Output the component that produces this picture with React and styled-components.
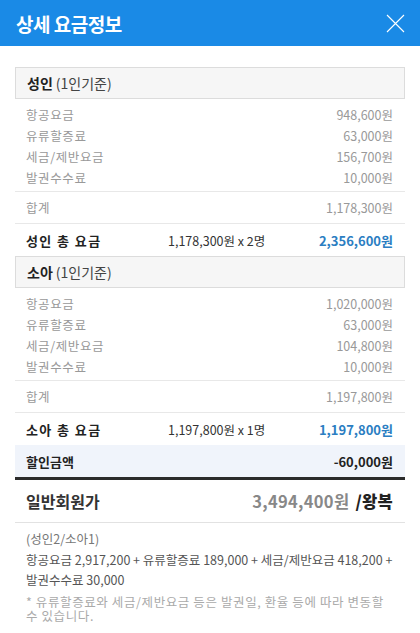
import React from 'react';
import styled, { createGlobalStyle } from 'styled-components';

const GlobalStyle = createGlobalStyle`
  html, body {
    margin: 0;
    padding: 0;
    background: #fff;
    font-family: "Noto Sans CJK KR", "Noto Sans", sans-serif;
  }
`;

// Styles //
const Page = styled.div`
  width: 420px;
  height: 633px;
  overflow: hidden;
  background: #fff;
`;

const Header = styled.div`
  height: 46px;
  background-color: #1a8ae6;
  display: flex;
  align-items: center;
  justify-content: space-between;
  padding: 0 15px 0 16px;
`;

const Title = styled.h1`
  margin: 0;
  color: #fff;
  font-size: 19px;
  font-weight: 700;
  letter-spacing: -0.5px;
`;

const CloseButton = styled.button`
  width: 20px;
  height: 20px;
  padding: 0;
  border: 0;
  background: none;
  display: flex;
  align-items: center;
  justify-content: center;
`;

const Body = styled.div`
  padding: 21px 15px 0;
`;

const SectionHead = styled.div`
  height: 30px;
  display: flex;
  align-items: center;
  padding: 0 11px;
  background-color: #f6f6f6;
  border: 1px solid #dcdcdc;
  font-size: 14px;
  color: #444;
  strong {
    color: #222;
    font-weight: 700;
    margin-right: 3px;
  }
`;

const Items = styled.div`
  padding: 5px 0 3px;
  border-bottom: 1px solid #e8e8e8;
`;

const Row = styled.div`
  display: flex;
  justify-content: space-between;
  align-items: center;
  padding: 0 12px 0 11px;
  height: ${({ tall }) => (tall ? '31px' : '21px')};
  font-size: 12.5px;
  color: #999;
`;

const RowLabel = styled.span`
  letter-spacing: 0.6px;
`;

const SumRow = styled(Row)`
  border-bottom: 1px solid #e8e8e8;
`;

const TotalRow = styled.div`
  height: 32px;
  display: grid;
  grid-template-columns: 142px 1fr auto;
  align-items: center;
  padding: 0 12px 0 11px;
  font-size: 13px;
`;

const TotalLabel = styled.span`
  font-weight: 700;
  color: #222;
  letter-spacing: 1.4px;
`;

const TotalCalc = styled.span`
  color: #333;
  font-size: 12.5px;
`;

const TotalValue = styled.span`
  color: #2b7ec2;
  font-weight: 700;
`;

const DiscountRow = styled.div`
  height: 32px;
  display: flex;
  justify-content: space-between;
  align-items: center;
  padding: 0 12px 0 11px;
  background-color: #f0f4fb;
  border-bottom: 3px solid #2b2b2b;
  font-size: 13px;
  font-weight: 700;
  color: #222;
`;

const GrandRow = styled.div`
  height: 42px;
  display: flex;
  justify-content: space-between;
  align-items: center;
  padding: 0 12px 0 11px;
  border-bottom: 1px solid #e2e2e2;
`;

const GrandLabel = styled.span`
  font-size: 16px;
  font-weight: 700;
  color: #333;
`;

const GrandValue = styled.span`
  font-size: 16.5px;
  font-weight: 700;
  color: #888;
  letter-spacing: 0.3px;
  b {
    color: #222;
    margin-left: 6px;
  }
`;

const Notes = styled.div`
  padding: 6px 11px 0;
`;

const NoteLine = styled.p`
  margin: 0;
  font-size: ${({ small }) => (small ? '12.5px' : '12.5px')};
  line-height: ${({ tight }) => (tight ? '14px' : '20.5px')};
  letter-spacing: ${({ small }) => (small ? '0.6px' : '0')};
  color: ${({ tone }) => tone};
  margin-top: ${({ gap }) => gap || 0};
`;

// Data //
const adult = {
  name: '성인',
  items: [
    ['항공요금', '948,600원'],
    ['유류할증료', '63,000원'],
    ['세금/제반요금', '156,700원'],
    ['발권수수료', '10,000원'],
  ],
  sum: '1,178,300원',
  calc: '1,178,300원 x 2명',
  total: '2,356,600원',
};

const child = {
  name: '소아',
  items: [
    ['항공요금', '1,020,000원'],
    ['유류할증료', '63,000원'],
    ['세금/제반요금', '104,800원'],
    ['발권수수료', '10,000원'],
  ],
  sum: '1,197,800원',
  calc: '1,197,800원 x 1명',
  total: '1,197,800원',
};

// Componentes //
const CloseIcon = () => (
  <svg width="19" height="19" viewBox="0 0 19 19">
    <path d="M1 1 L18 18 M18 1 L1 18" stroke="#fff" strokeWidth="1.1" fill="none" />
  </svg>
);

const FareSection = ({ data }) => (
  <>
    <SectionHead>
      <strong>{data.name}</strong>(1인기준)
    </SectionHead>
    <Items>
      {data.items.map(([label, value]) => (
        <Row key={label}>
          <RowLabel>{label}</RowLabel>
          <span>{value}</span>
        </Row>
      ))}
    </Items>
    <SumRow tall>
      <RowLabel>합계</RowLabel>
      <span>{data.sum}</span>
    </SumRow>
    <TotalRow>
      <TotalLabel>{data.name} 총 요금</TotalLabel>
      <TotalCalc>{data.calc}</TotalCalc>
      <TotalValue>{data.total}</TotalValue>
    </TotalRow>
  </>
);

const App = () => (
  <Page>
    <GlobalStyle />
    <Header>
      <Title>상세 요금정보</Title>
      <CloseButton aria-label="닫기">
        <CloseIcon />
      </CloseButton>
    </Header>
    <Body>
      <FareSection data={adult} />
      <FareSection data={child} />
      <DiscountRow>
        <span>할인금액</span>
        <span>-60,000원</span>
      </DiscountRow>
      <GrandRow>
        <GrandLabel>일반회원가</GrandLabel>
        <GrandValue>
          3,494,400원<b>/왕복</b>
        </GrandValue>
      </GrandRow>
      <Notes>
        <NoteLine tone="#777">(성인2/소아1)</NoteLine>
        <NoteLine tone="#555">
          항공요금 2,917,200 + 유류할증료 189,000 + 세금/제반요금 418,200 + 발권수수료 30,000
        </NoteLine>
        <NoteLine tone="#aaa" small tight gap="4px">
          * 유류할증료와 세금/제반요금 등은 발권일, 환율 등에 따라 변동할 수 있습니다.
        </NoteLine>
      </Notes>
    </Body>
  </Page>
);

export default App;
